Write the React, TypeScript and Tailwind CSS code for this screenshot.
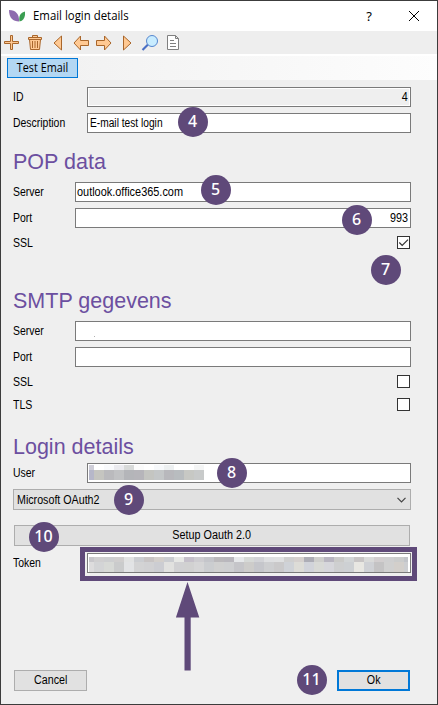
import type { ReactNode } from "react";

const USER_TOP = ["#cfced8", "#fff", "#f9fafc", "#ebebef", "#d8dad9", "#fbfbfb", "#fff", "#f7f9fb", "#edf0f1", "#fff", "#fff", "#f4f5f5"];
const USER_BOTTOM = ["#b6b7c9", "#c5c5c0", "#bababd", "#c1c2c4", "#b4b5b9", "#b6b5ba", "#c4c5c1", "#c4c7c8", "#b8b8bc", "#b8bcbf", "#c7c8c4", "#c8caca"];
const TOKEN_TOP = ["#c8c7cb", "#d0cfd0", "#cdced0", "#d0cece", "#e1e2e2", "#cbcdd1", "#c8c4c4", "#d3cfcb", "#cbcdd1", "#e7e8e5", "#c5c0ca", "#cdccd0", "#c4c5ca", "#bbb9bc", "#b9b7bd", "#e6e8ea", "#d6d9d7", "#d2d3d7", "#dedfe1", "#dfe0e1", "#cfcfcf", "#d5d0ce", "#adadb6", "#cececc", "#b8b5c0", "#cacac8", "#d2d5d6", "#c8c5c5", "#d9dad9", "#d2cecf", "#cfcfd0", "#cbcccc", "#c2c4c9"];
const TOKEN_BOTTOM = ["#dddcdd", "#d3d4d6", "#d7d9d6", "#cacbcc", "#e2e3e5", "#d3d3d4", "#d1d1d3", "#cccdd2", "#e1e1df", "#d1d1d3", "#d1d1d1", "#d5d5d6", "#cbcdd0", "#d0d0d0", "#cecfd1", "#c5c5c9", "#cdccca", "#c5c6cb", "#cdced0", "#cac9ca", "#cfd2d7", "#dddcd7", "#d1d3da", "#d8d9d6", "#d6d6db", "#cecfd0", "#cdd0d3", "#e8e7e2", "#cfd1d5", "#c4c3c4", "#d0d0d0", "#d3cfcb", "#cdced1"];

function Mosaic({ top, bottom, firstWidth, lastWidth }: { top: string[]; bottom: string[]; firstWidth: number; lastWidth: number }) {
  const width = (i: number, n: number) => (i === 0 ? firstWidth : i === n - 1 ? lastWidth : 10);
  return (
    <div className="flex flex-col">
      {[top, bottom].map((row, r) => (
        <div key={r} className="flex">
          {row.map((c, i) => (
            <span key={i} className={r === 0 ? "h-[5px] shrink-0" : "h-[10px] shrink-0"} style={{ background: c, width: width(i, row.length) }} />
          ))}
        </div>
      ))}
    </div>
  );
}

function Row({ label, wide, tone = "bg-white", children }: { label: string; wide?: boolean; tone?: string; children?: ReactNode }) {
  return (
    <div className="flex h-5 items-center">
      <span className={wide ? "w-[62px] shrink-0 whitespace-nowrap" : "w-[74px] shrink-0 whitespace-nowrap"}>
        <span className="inline-block origin-left scale-x-[.87]">{label}</span>
      </span>
      <div className={`flex h-5 flex-1 items-center border border-[#7a7a7a] ${tone}`}>{children}</div>
    </div>
  );
}

function CheckRow({ label, checked }: { label: string; checked?: boolean }) {
  return (
    <div className="flex h-[13px] items-center justify-between pr-px">
      <span className="inline-block origin-left scale-x-[.88]">{label}</span>
      <span className="flex h-[13px] w-[13px] border border-[#333] bg-white">
        {checked && (
          <svg width="11" height="11" viewBox="0 0 11 11" fill="none" stroke="#333" strokeWidth="1.2">
            <path d="M1.3 5.5 4.2 8.4 10 2.6" />
          </svg>
        )}
      </span>
    </div>
  );
}

function Heading({ children }: { children: ReactNode }) {
  return <h2 className="h-[26px] whitespace-nowrap text-[21.5px] leading-[26px] text-[#6c4fa0]">{children}</h2>;
}

const BADGES = [
  { n: "4", x: 177, y: 106 },
  { n: "5", x: 200, y: 174 },
  { n: "6", x: 341, y: 204 },
  { n: "7", x: 370, y: 254 },
  { n: "8", x: 216, y: 457 },
  { n: "9", x: 113, y: 484 },
  { n: "10", x: 28, y: 521 },
  { n: "11", x: 296, y: 664 },
];

function Toolbar() {
  return (
    <svg className="block" width="184" height="23" viewBox="0 31 184 23" fill="#ffc993" stroke="#a9662b" strokeWidth="1">
      <path d="M10.5 35.5h2v6h6v2h-6v6h-2v-6h-6v-2h6z" />
      <path d="M29.5 39.5h11l-1 10h-9zM28.5 37.5h13v2h-13zM32.5 37.5v-2h5v2" />
      <path d="M32.5 41v7M35 41v7M37.5 41v7" fill="none" />
      <path d="M61.5 36v14L54 43z" />
      <path d="M74 43l6.5-7v4.5h8v5h-8v4.500z" />
      <path d="M111 43l-6.500-7v4.500h-8v5h8v4.500z" />
      <path d="M123.500 36v14l7.500-7z" />
      <path d="M142.500 50l5.500-5.500" stroke="#4a6fc4" strokeWidth="2.200" />
      <circle cx="152" cy="41" r="5.500" fill="#c8ecff" stroke="#5687cf" />
      <path d="M167.500 35.500h8l3 3v11h-11zM175.500 35.500v3h3" fill="#fff" stroke="#808080" />
      <path d="M170 40.500h4M170 43.500h6M170 46.500h6" stroke="#808080" />
    </svg>
  );
}

export default function App() {
  return (
    <div className="relative flex h-[705px] w-[438px] flex-col overflow-hidden border border-[#3c3c3c] bg-[#efefef] font-['Liberation_Sans',Arial,sans-serif] text-[12px] leading-4 text-black">
      <header className="flex h-[30px] shrink-0 items-center bg-white">
        <svg className="ml-2 mr-2 block shrink-0" width="16" height="12" viewBox="0 0 16 12">
          <path d="M0 0C7 0 10.500 4.500 10 11.500C4 11.500 0 8 0 0Z" fill="#8e6bae" />
          <path d="M16 1.500C11.500 2.500 9.500 6 10.500 11.500C15 10.500 16.500 6.500 16 1.500Z" fill="#3b9e52" />
        </svg>
        <span className="whitespace-nowrap font-['Open_Sans','Noto_Sans',sans-serif]">
          <span className="inline-block origin-left scale-x-[.95]">Email login details</span>
        </span>
        <span className="ml-auto mr-[36px] font-['Noto_Sans',sans-serif] text-[13px]">?</span>
        <svg className="mr-[17px] block" width="12" height="12" viewBox="0 0 12 12" stroke="#000">
          <path d="M1 1l10 10M11 1 1 11" />
        </svg>
      </header>
      <nav className="-ml-px h-[23px] shrink-0 bg-[#eeeeee]">
        <Toolbar />
      </nav>
      <div className="flex h-[26px] shrink-0 items-center border-t-2 border-white bg-gradient-to-r from-[#f0f0f0] to-[#fdfdfd] pl-1.5">
        <button className="h-5 w-[71px] whitespace-nowrap border border-[#0078d7] bg-[#b3d7f3] font-['Open_Sans','Noto_Sans',sans-serif] leading-[18px]">
          <span className="inline-block scale-x-[.9]">Test Email</span>
        </button>
      </div>

      <main className="flex flex-1 flex-col pl-3 pr-[26px] pt-[7px]">
        <section className="flex flex-col gap-1.5">
          <Row label="ID" tone="bg-[#efefef] shadow-[inset_0_0_0_1px_white]">
            <span className="ml-auto mr-0.5 inline-block origin-right scale-x-[.9]">4</span>
          </Row>
          <Row label="Description">
            <span className="ml-0.5 inline-block origin-left scale-x-[.85] whitespace-nowrap">E-mail test login</span>
          </Row>
        </section>

        <section className="mt-4 flex flex-col">
          <Heading>POP data</Heading>
          <div className="mt-[7px] flex flex-col gap-1.5">
            <Row label="Server" wide>
              <span className="ml-px inline-block origin-left scale-x-[.91] whitespace-nowrap">outlook.office365.com</span>
            </Row>
            <Row label="Port" wide>
              <span className="ml-auto mr-0.5 inline-block origin-right scale-x-[.9]">993</span>
            </Row>
          </div>
          <div className="mt-2"><CheckRow label="SSL" checked /></div>
        </section>

        <section className="mt-[39px] flex flex-col">
          <Heading>SMTP gegevens</Heading>
          <div className="mt-[7px] flex flex-col gap-1.5">
            <Row label="Server" wide>
              <span className="ml-[18px] mt-[11px] h-px w-px bg-[#b0b0b0]" />
            </Row>
            <Row label="Port" wide />
          </div>
          <div className="mt-2 flex flex-col gap-2.5">
            <CheckRow label="SSL" />
            <CheckRow label="TLS" />
          </div>
        </section>

        <section className="mt-[23px] flex flex-col">
          <Heading>Login details</Heading>
          <div className="mt-[3px]">
            <Row label="User">
              <div className="ml-px mt-px self-start">
                <Mosaic top={USER_TOP} bottom={USER_BOTTOM} firstWidth={5} lastWidth={10} />
              </div>
            </Row>
          </div>
          <div className="mt-1.5 flex h-[21px] items-center justify-between border border-[#adadad] bg-[#e1e1e1] pl-[3px] pr-1">
            <span className="inline-block origin-left scale-x-[.89] whitespace-nowrap">Microsoft OAuth2</span>
            <svg width="9" height="6" viewBox="0 0 9 6" fill="none" stroke="#444" strokeWidth="1.200">
              <path d="M.5.800 4.500 4.800 8.500.800" />
            </svg>
          </div>
          <button className="ml-px mr-px mt-[15px] h-[21px] border border-[#adadad] bg-[#e1e1e1] leading-[19px]">
            <span className="inline-block scale-x-[.9]">Setup Oauth 2.0</span>
          </button>
          <div className="mt-[7px]">
            <Row label="Token">
              <div className="ml-px self-end">
                <Mosaic top={TOKEN_TOP} bottom={TOKEN_BOTTOM} firstWidth={5} lastWidth={4} />
              </div>
            </Row>
          </div>
        </section>

        <footer className="mb-[13px] mt-auto flex justify-between px-px">
          <button className="h-[21px] w-[73px] border border-[#adadad] bg-[#e1e1e1] leading-[19px]">
            <span className="inline-block scale-x-[.89]">Cancel</span>
          </button>
          <button className="h-[21px] w-[73px] border-2 border-[#0078d7] bg-[#e1e1e1] leading-[17px]">
            <span className="inline-block scale-x-[.89]">Ok</span>
          </button>
        </footer>
      </main>

      <div className="pointer-events-none absolute left-[79px] top-[546px] h-[34px] w-[337px] border-[5px] border-[#5f4979]" />
      <svg className="absolute left-[174px] top-[581px]" width="26" height="90" viewBox="0 0 26 90" fill="#5f4979">
        <path d="M12.500 0 24.300 35.500H15.700V88.500H9.500V35.500H.900Z" />
      </svg>
      {BADGES.map((b) => (
        <span
          key={b.n}
          className="absolute flex h-[30px] w-[30px] items-center justify-center rounded-full bg-[#5f4979] pb-px font-['Noto_Sans',sans-serif] text-[16px] font-medium leading-none text-white"
          style={{ left: b.x - 0.5, top: b.y - 0.5 }}
        >
          {b.n}
        </span>
      ))}
    </div>
  );
}
